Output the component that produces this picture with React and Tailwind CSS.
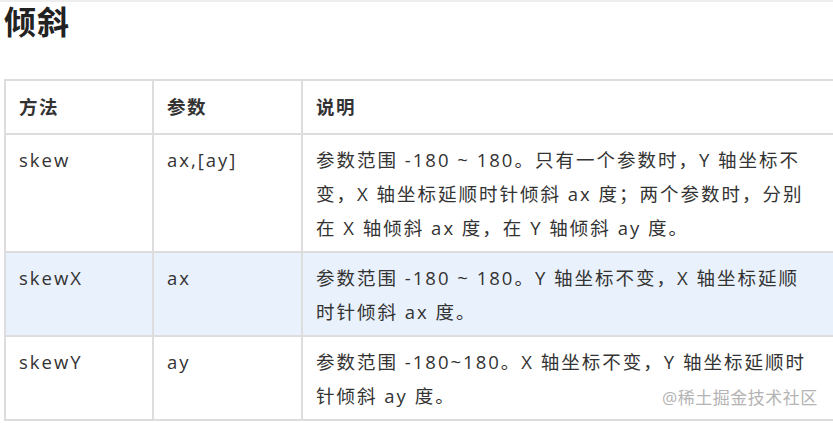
import React from "react";

const rows = [
  {
    method: "skew",
    params: "ax,[ay]",
    desc: "参数范围 -180 ~ 180。只有一个参数时，Y 轴坐标不变，X 轴坐标延顺时针倾斜 ax 度；两个参数时，分别在 X 轴倾斜 ax 度，在 Y 轴倾斜 ay 度。",
    active: false,
  },
  {
    method: "skewX",
    params: "ax",
    desc: "参数范围 -180 ~ 180。Y 轴坐标不变，X 轴坐标延顺时针倾斜 ax 度。",
    active: true,
  },
  {
    method: "skewY",
    params: "ay",
    desc: "参数范围 -180~180。X 轴坐标不变，Y 轴坐标延顺时针倾斜 ay 度。",
    active: false,
  },
];

const App = () => {
  return (
    <div
      className="relative w-[833px] h-[423px] overflow-hidden bg-white text-[#333]"
      style={{ fontFamily: '"Open Sans", "Noto Sans CJK SC", sans-serif' }}
    >
      {/* TOP STRIP */}
      <div className="h-[2px] bg-[#eeeeee]" />

      {/* TITLE */}
      <h1 className="ml-[4px] mt-[1px] text-[32px] leading-[38px] tracking-[1px] font-bold text-[#222]">
        倾斜
      </h1>

      {/* TABLE */}
      <div className="mt-[38px] ml-[4px] w-[829px] overflow-hidden">
        <table className="w-[832px] table-fixed border-collapse text-[18.5px] leading-[34px] tracking-[2px]">
          <colgroup>
            <col className="w-[148px]" />
            <col className="w-[149px]" />
            <col />
          </colgroup>
          <thead>
            <tr className="h-[54px]">
              <th className="border-2 border-[#dddddd] px-[13px] text-left font-bold tracking-[1.5px]">
                方法
              </th>
              <th className="border-2 border-[#dddddd] px-[13px] text-left font-bold tracking-[1.5px]">
                参数
              </th>
              <th className="border-2 border-[#dddddd] px-[13px] text-left font-bold tracking-[1.5px]">
                说明
              </th>
            </tr>
          </thead>
          <tbody>
            {rows.map((row) => (
              <tr
                key={row.method}
                className={row.active ? "bg-[#e9f1fc]" : "bg-white"}
              >
                <td className="border-2 border-[#dddddd] px-[13px] pt-[8px] pb-[6px] align-top">
                  {row.method}
                </td>
                <td className="border-2 border-[#dddddd] px-[13px] pt-[8px] pb-[6px] align-top">
                  {row.params}
                </td>
                <td className="border-2 border-[#dddddd] pl-[13px] pr-[28px] pt-[8px] pb-[6px] align-top">
                  {row.desc}
                </td>
              </tr>
            ))}
          </tbody>
        </table>
      </div>

      {/* WATERMARK */}
      <div className="absolute left-[662px] top-[385px] text-[17px] leading-[26px] tracking-[0.5px] text-[#b4b4b4]">
        @稀土掘金技术社区
      </div>
    </div>
  );
};

export default App;
